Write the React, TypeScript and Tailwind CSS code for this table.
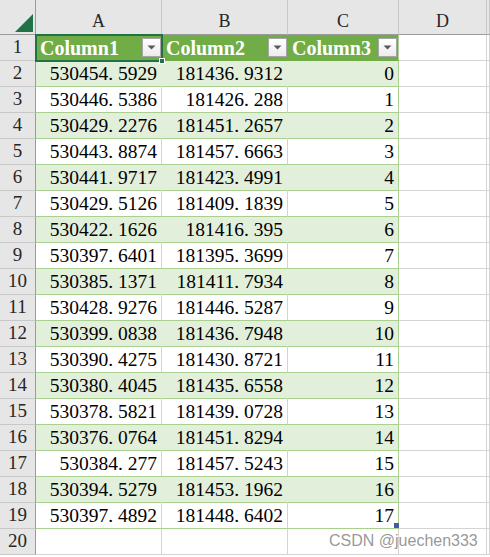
const serif = "[font-family:'Liberation_Serif',serif]";

const classes = {
    colHead: "flex items-center justify-center pt-[9px] text-[18px] bg-[#e6e6e6] border-r border-b border-r-[#c8c8c8] border-b-[#9b9b9b] text-[#262626]",
    rowHead: "flex items-center justify-center text-[19px] bg-[#e6e6e6] border-r border-b border-r-[#9b9b9b] border-b-[#c8c8c8] text-[#262626]",
    headCell: "flex items-center justify-between pl-1 pr-[1px] bg-[#70ad47] text-white font-bold text-[20px] border-b border-b-[#70ad47]",
    num: "flex items-center justify-end pr-[4px] text-[19.5px] text-black border-b",
    empty: "border-r border-b border-[#d4d4d4] bg-white",
};

type Row = [string, string, number];

const rows: Row[] = [
    ["530454.5929", "181436.9312", 0],
    ["530446.5386", "181426.288", 1],
    ["530429.2276", "181451.2657", 2],
    ["530443.8874", "181457.6663", 3],
    ["530441.9717", "181423.4991", 4],
    ["530429.5126", "181409.1839", 5],
    ["530422.1626", "181416.395", 6],
    ["530397.6401", "181395.3699", 7],
    ["530385.1371", "181411.7934", 8],
    ["530428.9276", "181446.5287", 9],
    ["530399.0838", "181436.7948", 10],
    ["530390.4275", "181430.8721", 11],
    ["530380.4045", "181435.6558", 12],
    ["530378.5821", "181439.0728", 13],
    ["530376.0764", "181451.8294", 14],
    ["530384.277", "181457.5243", 15],
    ["530394.5279", "181453.1962", 16],
    ["530397.4892", "181448.6402", 17],
];

// half-width period like the SimSun one in the sheet
const Num = ({value}: { value: string }) => {
    const [a, b] = value.split(".");
    if (b === undefined) return <span>{a}</span>;
    return <span>{a}<span className="inline-block w-[0.5em] text-left">.</span>{b}</span>;
};

const Dropdown = () => (
    <div className="w-[19px] h-[19px] border border-[#a6a6a6] bg-gradient-to-b from-white to-[#ececec] flex items-center justify-center shrink-0">
        <svg width="9" height="5" viewBox="0 0 9 5"><path d="M0.5 0.5 H8.5 L4.5 4.5 Z" fill="#595959"/></svg>
    </div>
);

export default function App() {
    return (
        <div className={`relative w-[490px] h-[557px] overflow-hidden bg-white ${serif}`}>
            <div className="grid grid-cols-[36px_126px_126px_111px_88px_1fr] grid-rows-[35px_repeat(20,26px)]">
                {/* corner */}
                <div className="relative bg-[#e6e6e6] border-r border-b border-r-[#9b9b9b] border-b-[#9b9b9b]">
                    <svg className="absolute left-[15px] top-[14px]" width="18" height="18" viewBox="0 0 18 18">
                        <path d="M18 0 V18 H0 Z" fill="#217346"/>
                    </svg>
                </div>
                <div className={`${classes.colHead} bg-[#d2d2d2] text-[#217346]`}>A</div>
                <div className={classes.colHead}>B</div>
                <div className={classes.colHead}>C</div>
                <div className={classes.colHead}>D</div>
                <div className={classes.colHead}></div>

                {/* row 1: table header */}
                <div className={`${classes.rowHead} bg-[#d2d2d2] text-[#217346]`}>1</div>
                <div className={classes.headCell}><span>Column1</span><Dropdown/></div>
                <div className={classes.headCell}><span>Column2</span><Dropdown/></div>
                <div className={`${classes.headCell} border-r border-r-[#a9d08e]`}><span>Column3</span><Dropdown/></div>
                <div className={classes.empty}></div>
                <div className={classes.empty}></div>

                {rows.map((r, i) => {
                    const band = i % 2 === 0;
                    const fill = band ? "bg-[#e2efda] border-b-[#a9d08e]" : "bg-white border-b-[#a9d08e]";
                    const inner = band ? "border-r border-r-[#e2efda]" : "border-r border-r-[#d4d4d4]";
                    return [
                        <div key={`h${i}`} className={classes.rowHead}>{i + 2}</div>,
                        <div key={`a${i}`} className={`${classes.num} ${fill} ${inner}`}><Num value={r[0]}/></div>,
                        <div key={`b${i}`} className={`${classes.num} ${fill} ${inner}`}><Num value={r[1]}/></div>,
                        <div key={`c${i}`} className={`${classes.num} ${fill} border-r border-r-[#a9d08e] pr-[3px]`}>{r[2]}</div>,
                        <div key={`d${i}`} className={classes.empty}></div>,
                        <div key={`e${i}`} className={classes.empty}></div>,
                    ];
                })}

                <div className={classes.rowHead}>20</div>
                <div className={classes.empty}></div>
                <div className={classes.empty}></div>
                <div className={classes.empty}></div>
                <div className={classes.empty}></div>
                <div className={classes.empty}></div>
            </div>

            {/* selection of A1 */}
            <div className="absolute left-[35px] top-[34px] w-[128px] h-[28px] border-2 border-[#217346] pointer-events-none"/>
            <div className="absolute left-[159px] top-[58px] w-[6px] h-[6px] bg-[#217346] border border-white"/>

            {/* table resize handle */}
            <div className="absolute left-[394px] top-[523px] w-[5px] h-[5px] bg-[#4658a8]"/>

            <div className="absolute left-[329px] top-[529px] text-[16px] text-[#8c8c8c]/90 [font-family:'Liberation_Sans',sans-serif]">
                CSDN @juechen333
            </div>
        </div>
    );
}
